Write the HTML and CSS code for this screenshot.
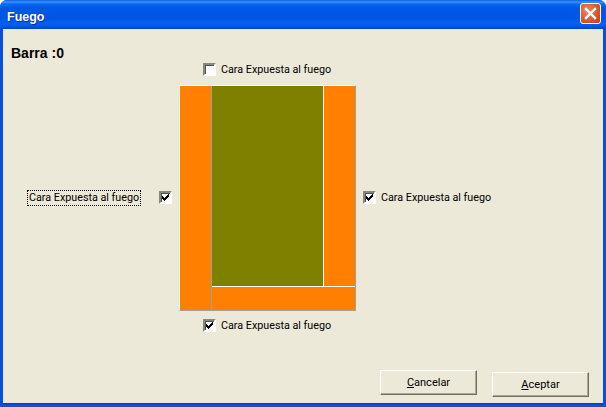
FILE: index.html
```html
<!DOCTYPE html>
<html lang="es">
<head>
  <meta charset="UTF-8" />
  <title>Fuego</title>
  <link rel="stylesheet" href="styles.css">
</head>
<body>
  <div class="window">
    <div class="titlebar">
      <span class="title">Fuego</span>
      <div class="close-btn">
        <svg width="13" height="13" viewBox="0 0 13 13"><path d="M2 2 L11 11 M11 2 L2 11" stroke="#fff" stroke-width="2.4" stroke-linecap="square" fill="none"/></svg>
      </div>
    </div>

    <div class="content">
      <h1 class="bar-name">Barra :0</h1>

      <div class="stage">
        <label class="option option-top">
          <span class="check"></span>
          <span>Cara Expuesta al fuego</span>
        </label>

        <label class="option option-left">
          <span class="focused">Cara Expuesta al fuego</span>
          <span class="check checked">
            <svg width="9" height="9" viewBox="0 0 9 9" shape-rendering="crispEdges"><path d="M1 3h1v1h1v1h1V4h1V3h1V2h1V1h1v3H7v1H6v1H5v1H4v1H3V7H2V6H1z" fill="#000"/></svg>
          </span>
        </label>

        <div class="figure">
          <div class="face face-left"></div>
          <div class="core"></div>
          <div class="face face-right"></div>
          <div class="face face-bottom"></div>
        </div>

        <label class="option option-right">
          <span class="check checked">
            <svg width="9" height="9" viewBox="0 0 9 9" shape-rendering="crispEdges"><path d="M1 3h1v1h1v1h1V4h1V3h1V2h1V1h1v3H7v1H6v1H5v1H4v1H3V7H2V6H1z" fill="#000"/></svg>
          </span>
          <span>Cara Expuesta al fuego</span>
        </label>

        <label class="option option-bottom">
          <span class="check checked">
            <svg width="9" height="9" viewBox="0 0 9 9" shape-rendering="crispEdges"><path d="M1 3h1v1h1v1h1V4h1V3h1V2h1V1h1v3H7v1H6v1H5v1H4v1H3V7H2V6H1z" fill="#000"/></svg>
          </span>
          <span>Cara Expuesta al fuego</span>
        </label>
      </div>

      <div class="actions">
        <button class="btn"><u>C</u>ancelar</button>
        <button class="btn btn-low"><u>A</u>ceptar</button>
      </div>
    </div>
  </div>
</body>
</html>
```

FILE: styles.css
```css
* {
  box-sizing: border-box;
}
html, body {
  margin: 0;
  background: #fff;
}
body {
  font-family: Roboto, "Liberation Sans", Arial, sans-serif;
  font-size: 11px;
  color: #000;
}
.window {
  width: 606px;
  height: 407px;
  display: flex;
  flex-direction: column;
  overflow: hidden;
  border-radius: 7px 7px 0 0;
  background: #0a4ee0;
}
.titlebar {
  height: 29px;
  flex: none;
  display: flex;
  align-items: center;
  justify-content: space-between;
  padding: 0 5px 0 7px;
  background: linear-gradient(to bottom, #0a5fe0 0, #3a93ff 2px, #0a6af0 4px, #0058e6 8px, #0055e5 18px, #0062f2 24px, #0058e8 26px, #0041c8 29px);
}
.title {
  padding-top: 5px;
  color: #fff;
  font-family: "Liberation Sans", Arial, sans-serif;
  font-weight: bold;
  font-size: 12.5px;
  text-shadow: 1px 1px 0 #0a2f9c;
}
.close-btn {
  width: 21px;
  height: 21px;
  margin-bottom: 2px;
  display: flex;
  align-items: center;
  justify-content: center;
  border: 1px solid #fff;
  border-radius: 3px;
  background: radial-gradient(circle at 35% 35%, #e98a6e 0, #df5a30 50%, #c83a14 100%);
}
.content {
  flex: 1;
  display: flex;
  flex-direction: column;
  margin: 0 3px 3px;
  background: #ece9d8;
  border-bottom: 1px solid #0a3cc0;
}
.bar-name {
  margin: 17px 0 0 8px;
  font-family: "Liberation Sans", Arial, sans-serif;
  font-size: 14px;
  line-height: 15px;
  font-weight: bold;
}
.stage {
  display: grid;
  grid-template-columns: 176px 177px 1fr;
  grid-template-rows: 13px 226px 13px;
  row-gap: 9px;
  margin-top: 2px;
}
.option {
  display: flex;
  align-items: center;
  gap: 5px;
  font-size: 10.75px;
  line-height: 13px;
}
.option-top {
  grid-column: 2 / 4;
  grid-row: 1;
  padding-left: 24px;
}
.option-left {
  grid-column: 1;
  grid-row: 2;
  padding: 0 7px 1px 25px;
  justify-content: space-between;
}
.option-right {
  grid-column: 3;
  grid-row: 2;
  padding: 0 0 1px 7px;
}
.option-bottom {
  grid-column: 2 / 4;
  grid-row: 3;
  padding-left: 24px;
  margin: -1px 0 1px;
}
.focused {
  padding: 0 1px;
  outline: 1px dotted #000;
  line-height: 14px;
}
.check {
  width: 13px;
  height: 13px;
  flex: none;
  display: flex;
  align-items: center;
  justify-content: center;
  background: #fff;
  border: 2px solid;
  border-color: #85877d #fff #fff #85877d;
  box-shadow: inset 1px 1px 0 #55554c;
}
.figure {
  grid-column: 2;
  grid-row: 2;
  display: grid;
  grid-template-columns: 32px 112px 31px;
  grid-template-rows: 200px 24px;
  border: 1px solid;
  border-color: #fff #a0a0a0 #a0a0a0 #fff;
}
.face {
  background: #ff8000;
}
.face-left {
  grid-row: 1 / 3;
  border-right: 1px solid #a0a0a0;
}
.core {
  background: #808000;
  border-right: 1px solid #fff;
}
.face-bottom {
  grid-column: 2 / 4;
  border-top: 1px solid #fff;
}
.actions {
  display: flex;
  gap: 15px;
  margin: auto 0 0 377px;
  padding-bottom: 8px;
}
.btn {
  width: 97px;
  height: 25px;
  padding: 0;
  font-family: inherit;
  font-size: 11px;
  color: #000;
  background: #ece9d8;
  border: 1px solid;
  border-color: #fff #716f64 #716f64 #fff;
  box-shadow: inset -1px -1px 0 #aca899;
}
.btn-low {
  position: relative;
  top: 2px;
}
```
